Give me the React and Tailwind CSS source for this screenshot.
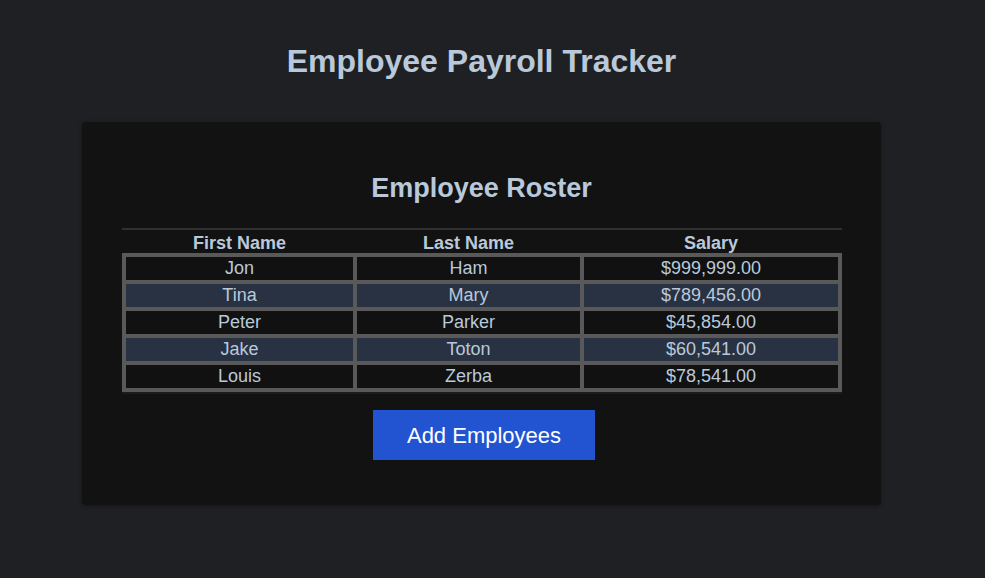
const employees = [
  { first: "Jon", last: "Ham", salary: "$999,999.00" },
  { first: "Tina", last: "Mary", salary: "$789,456.00" },
  { first: "Peter", last: "Parker", salary: "$45,854.00" },
  { first: "Jake", last: "Toton", salary: "$60,541.00" },
  { first: "Louis", last: "Zerba", salary: "$78,541.00" },
];

const cols = "grid grid-cols-[227px_223px_254px] gap-x-[4px]";

export default function App() {
  return (
    <div className="min-h-[578px] w-full bg-[#1f2023] font-['Liberation_Sans',Arial,sans-serif] text-[#b9c9da]">
      <div className="ml-[82px] w-[799px] pt-[43px]">
        <h1 className="text-center text-[32px] font-bold leading-[36px]">
          Employee Payroll Tracker
        </h1>

        <div className="mt-[43px] h-[383px] rounded-[4px] bg-[#121212] px-[40px] pt-[51px] shadow-[0_1px_4px_rgba(0,0,0,0.35)]">
          <h2 className="text-center text-[27px] font-bold leading-[30px]">
            Employee Roster
          </h2>

          <div className="mt-[25px] w-[720px]">
            {/* header */}
            <div className="border-t-2 border-[#2f2f2f] px-[4px]">
              <div className={`${cols} h-[23px] items-center pb-[2px] text-center text-[18px] font-bold`}>
                <div>First Name</div>
                <div>Last Name</div>
                <div>Salary</div>
              </div>
            </div>

            {/* body */}
            <div className="grid gap-y-[4px] bg-[#595959] p-[4px]">
              {employees.map((emp, i) => (
                <div key={emp.first} className={cols}>
                  {[emp.first, emp.last, emp.salary].map((v, j) => (
                    <div
                      key={j}
                      className={`flex h-[23px] items-center justify-center text-[18px] ${
                        i % 2 === 1 ? "bg-[#293243]" : "bg-[#111111]"
                      }`}
                    >
                      {v}
                    </div>
                  ))}
                </div>
              ))}
            </div>
            <div className="h-[2px] bg-[#1c1c1c]" />
          </div>

          <div className="mt-[16px] flex justify-center pl-[5px]">
            <button
              type="button"
              className="h-[50px] w-[222px] bg-[#2254d1] text-[22px] text-white"
            >
              Add Employees
            </button>
          </div>
        </div>
      </div>
    </div>
  );
}
